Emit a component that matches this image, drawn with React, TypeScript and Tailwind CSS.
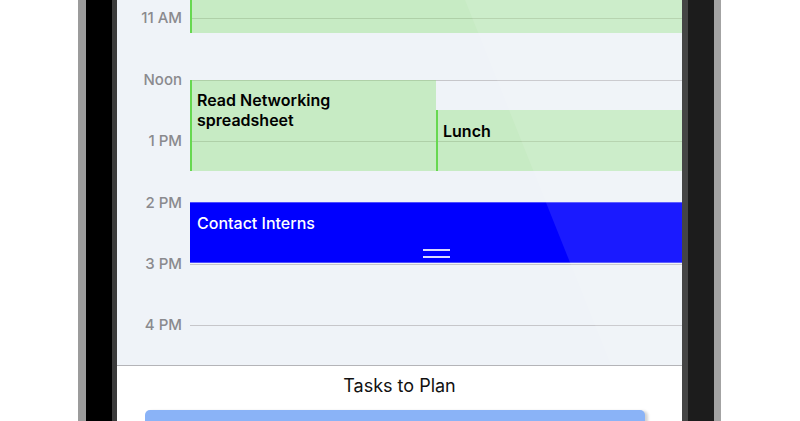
import React from 'react';

// first and last rows only carry grid lines, they sit outside the visible area
const hours = ['', '11 AM', 'Noon', '1 PM', '2 PM', '3 PM', '4 PM', ' '];

const font = { fontFamily: 'Inter, "Noto Sans", sans-serif' };

const CalendarDay: React.FC = () => {
  return (
    <div className="relative h-[365px] shrink-0 overflow-hidden bg-[#eff3f8]">
      <div className="-mt-[43px] flex flex-col">
        {hours.map((h, i) => (
          <div key={i} className="flex h-[61.4px] shrink-0">
            <div className="h-[20px] w-[65px] -translate-y-1/2 text-right text-[15px] leading-[20px] font-medium text-[#8a8a8e]">
              {h}
            </div>
            <div className="ml-[8px] flex-1 border-t border-[#c6c6ca]" />
          </div>
        ))}
      </div>

      {/* events */}
      <div className="absolute left-[73px] right-0 top-[-20px] h-[53px] border-l-2 border-[#66d84f] bg-[#8ddf76]/40" />

      <div className="absolute left-[73px] top-[80px] h-[91px] w-[246px] border-l-2 border-[#66d84f] bg-[#8ddf76]/40 pl-[5px] pt-[10px] text-[16px] leading-[20px] font-semibold text-black">
        Read Networking
        <br />
        spreadsheet
      </div>

      <div className="absolute left-[319px] right-0 top-[110px] h-[61px] border-l-2 border-[#66d84f] bg-[#8ddf76]/40 pl-[5px] pt-[11px] text-[16px] leading-[20px] font-semibold text-black">
        Lunch
      </div>

      <div className="absolute left-[73px] right-0 top-[202px] flex h-[61px] flex-col border-y border-[#4d4dff] bg-[#0000ff] pl-[7px] pt-[10px] text-[16px] leading-[20px] font-medium text-white">
        <span>Contact Interns</span>
        <div className="mt-auto mb-[4px] -ml-[7px] flex flex-col gap-[5px] self-center">
          <div className="h-[2px] w-[27px] bg-white/85" />
          <div className="h-[2px] w-[27px] bg-white/85" />
        </div>
      </div>

      {/* screen glare */}
      <svg className="pointer-events-none absolute inset-0" width="565" height="365" viewBox="0 0 565 365">
        <polygon points="348,0 565,0 565,365 494,365" fill="#ffffff" fillOpacity="0.1" />
      </svg>
    </div>
  );
};

const TasksPanel: React.FC = () => {
  return (
    <div className="flex flex-1 flex-col border-t border-[#b4b4b8] bg-white">
      <div className="pt-[9px] text-center text-[18px] leading-[22px] text-[#111]">Tasks to Plan</div>
      <div className="ml-[28px] mt-[13px] h-[30px] w-[500px] shrink-0 rounded-t-[5px] bg-[#8ab3f7] shadow-[3px_1px_3px_rgba(0,0,0,0.18)]" />
    </div>
  );
};

export default function App() {
  return (
    <div className="flex h-[421px] w-[800px] overflow-hidden bg-white" style={font}>
      <div className="w-[78px]" />
      <div className="w-[8px] bg-[#9b9b9b]" />
      <div className="w-[26px] bg-black" />
      <div className="w-[5px] bg-[#3b3b3b]" />
      <div className="flex w-[565px] flex-col overflow-hidden">
        <CalendarDay />
        <TasksPanel />
      </div>
      <div className="w-[6px] bg-[#454545]" />
      <div className="w-[26px] bg-[#1c1c1c]" />
      <div className="w-[7px] bg-[#a3a3a3]" />
      <div className="flex-1" />
    </div>
  );
}
